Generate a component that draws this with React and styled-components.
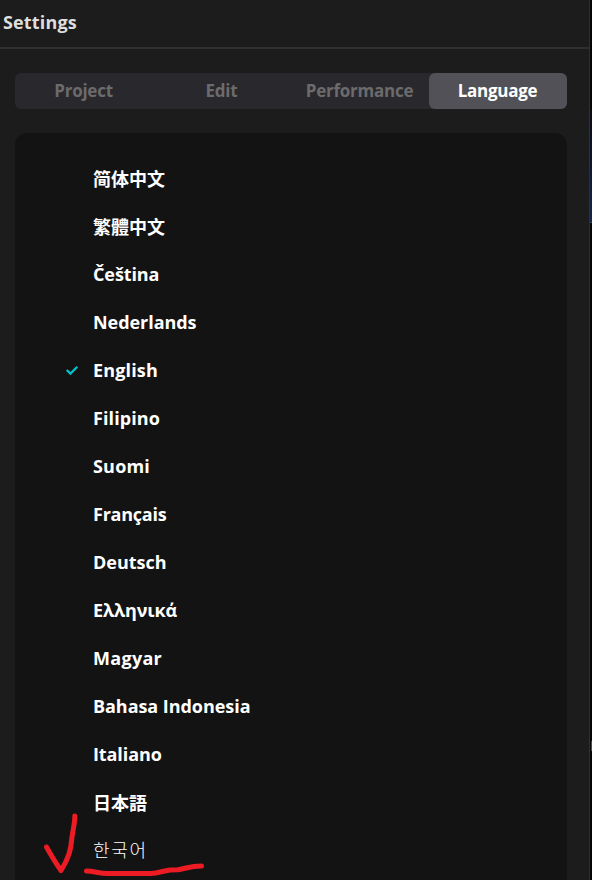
import React, { useState } from 'react'
import styled, { createGlobalStyle } from 'styled-components'

const tabs = [
    { name: "Project" },
    { name: "Edit" },
    { name: "Performance" },
    { name: "Language" },
]

const languages = [
    { name: "简体中文", lang: "zh-CN", spacing: 0 },
    { name: "繁體中文", lang: "zh-TW", spacing: 0 },
    { name: "Čeština", spacing: -0.1 },
    { name: "Nederlands", spacing: -0.05 },
    { name: "English", spacing: 0.15 },
    { name: "Filipino", spacing: 0.1 },
    { name: "Suomi", spacing: 0.2 },
    { name: "Français", spacing: -0.25 },
    { name: "Deutsch", spacing: 0 },
    { name: "Ελληνικά", spacing: -0.1 },
    { name: "Magyar", spacing: 0.3 },
    { name: "Bahasa Indonesia", spacing: -0.05 },
    { name: "Italiano", spacing: -0.1 },
    { name: "日本語", lang: "ja", spacing: 0 },
    { name: "한국어", lang: "ko", spacing: 1.7 },
]

const App = () => {
    const [tab, setTab] = useState("Language")
    const [language, setLanguage] = useState("English")

    return (
        <>
            <GlobalStyle />
            <Screen>
                <Dialog>
                    <Header>Settings</Header>
                    <TabBar>
                        {tabs.map((item) => (
                            <Tab
                                key={item.name}
                                $active={item.name === tab}
                                onClick={() => setTab(item.name)}
                            >
                                {item.name}
                            </Tab>
                        ))}
                    </TabBar>
                    <LanguageList>
                        {languages.map((item) => (
                            <LanguageRow key={item.name} onClick={() => setLanguage(item.name)}>
                                <CheckSlot>
                                    {item.name === language && <CheckIcon />}
                                </CheckSlot>
                                <LanguageName lang={item.lang} $lang={item.lang} $spacing={item.spacing}>
                                    {item.name}
                                </LanguageName>
                            </LanguageRow>
                        ))}
                    </LanguageList>
                </Dialog>
                <Backdrop>
                    <BackdropBlue />
                    <BackdropMark />
                </Backdrop>
                <Marker />
            </Screen>
        </>
    )
}

const CheckIcon = () => (
    <svg width="14" height="12" viewBox="0 0 14 12" fill="none">
        <path d="M1.7 6 L5.4 9.6 L12.3 2.8" stroke="#00c1cd" strokeWidth="2.3" />
    </svg>
)

// hand-drawn tick and underline over the last row
const Marker = () => (
    <MarkerLayer width="170" height="70" viewBox="40 810 170 70" fill="none">
        <path d="M46.5 847 C51 855 55 862 61 870.5 C69 858 71 849 72 837 C73 829 75 823 74.8 816" />
        <path d="M86.5 871 C95 871 99 873.8 109 873.5 L151 873.5 C159 873 162 871 170 870 L178 869.8 C188 868 190 866 201.5 866" />
    </MarkerLayer>
)

const GlobalStyle = createGlobalStyle`
    * {
        box-sizing: border-box;
    }
    body {
        margin: 0;
        background-color: #050505;
        overflow: hidden;
    }
`

const Screen = styled.div`
    position: relative;
    display: flex;
    width: 592px;
    height: 880px;
    overflow: hidden;
    font-family: "Open Sans", "Noto Sans", "Noto Sans CJK SC", sans-serif;
    font-weight: 700;
`

const Dialog = styled.div`
    width: 590px;
    height: 880px;
    background-color: #1c1c1c;
    border-right: 1px solid #303030;
    overflow: hidden;
`

const Header = styled.div`
    height: 49px;
    padding: 10px 3px 0;
    border-bottom: 2px solid #303030;
    color: #dedede;
    font-size: 18px;
    letter-spacing: 0.15px;
    line-height: 24px;
`

const TabBar = styled.div`
    display: grid;
    grid-template-columns: repeat(4, 1fr);
    width: 552px;
    height: 36px;
    margin: 24px 0 0 15px;
    border-radius: 6px;
    background-color: #29282d;
`

const Tab = styled.button`
    padding: 0 1px 0 0;
    border: none;
    border-radius: 6px;
    background-color: ${(props) => (props.$active ? "#525157" : "transparent")};
    color: ${(props) => (props.$active ? "#ffffff" : "#6c6b6c")};
    font: inherit;
    font-size: 17px;
    letter-spacing: -0.25px;
    line-height: 24px;
    text-align: center;
`

const LanguageList = styled.div`
    width: 552px;
    height: 760px;
    margin: 24px 0 0 15px;
    padding-top: 21px;
    border-radius: 12px;
    background-color: #131313;
`

const LanguageRow = styled.div`
    display: flex;
    align-items: center;
    height: 48px;
    padding-left: 50px;
`

const CheckSlot = styled.div`
    display: flex;
    align-items: center;
    width: 28px;
    height: 24px;
`

const cjkFonts = {
    "zh-CN": `"Noto Sans CJK SC"`,
    "zh-TW": `"Noto Sans CJK TC"`,
    "ja": `"Noto Sans CJK JP"`,
    "ko": `"Noto Sans CJK KR"`,
}

const LanguageName = styled.span`
    color: #ffffff;
    font-family: ${(props) => cjkFonts[props.$lang] || `"Open Sans"`}, sans-serif;
    font-size: 18px;
    font-weight: ${(props) => (props.$lang === "ko" ? 300 : 700)};
    letter-spacing: ${(props) => props.$spacing}px;
    line-height: 24px;
    padding-bottom: ${(props) => (props.$lang === "ko" ? "2px" : "0")};
    white-space: nowrap;
`

const Backdrop = styled.div`
    display: flex;
    flex-direction: column;
    width: 2px;
    padding-top: 109px;
    background-color: #050505;
`

const BackdropBlue = styled.div`
    height: 114px;
    background: linear-gradient(#0a0a12, #0b1230 40%, #14264f);
    border-bottom: 1px solid #34405c;
`

const BackdropMark = styled.div`
    height: 10px;
    margin: 518px 0 0 1px;
    background-color: #4a4a58;
`

const MarkerLayer = styled.svg`
    position: absolute;
    left: 40px;
    top: 810px;
    stroke: #ed1c24;
    stroke-width: 5px;
    stroke-linecap: round;
    stroke-linejoin: round;
    pointer-events: none;
`

export default App
